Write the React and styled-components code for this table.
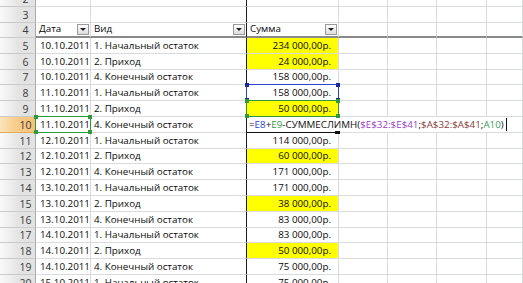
import React from "react";
import styled, { createGlobalStyle } from "styled-components";

const Global = createGlobalStyle`
  html, body { margin: 0; padding: 0; background: #fff; overflow: hidden; }
  body { width: 523px; height: 283px; }
`;

const COLS = "36px 55px 156px 92px 49px 49px 50px 1fr";

const Sheet = styled.div`
  margin-top: -8px;
  font-family: "Open Sans", Lato, sans-serif;
  font-size: 9.8px;
  color: #0a0a0a;
`;

const Row = styled.div`
  display: grid;
  grid-template-columns: ${COLS};
  height: ${(p) => p.$h}px;
  position: relative;
`;

const Head = styled.div`
  box-sizing: border-box;
  background: ${(p) =>
    p.$active
      ? "linear-gradient(90deg, #fbe3bb 0%, #f8cc8a 45%, #f6c27a 100%)"
      : "linear-gradient(90deg, #fafafa 0%, #f0f0f0 25%, #e4e4e4 50%, #e2e2e2 100%)"};
  border-right: 1px solid ${(p) => (p.$active ? "#d9a24e" : "#a9a9a9")};
  border-bottom: 1px solid ${(p) => (p.$active ? "#e0ac5c" : "#cacaca")};
  display: flex;
  align-items: flex-end;
  justify-content: center;
  padding: 0 0 0 16px;
  color: #3a3a3a;
  font-size: 10.5px;
  overflow: hidden;
`;

const Cell = styled.div`
  box-sizing: border-box;
  position: relative;
  border-right: 1px solid ${(p) => (p.$dark ? "#1c1c1c" : "#d9dbdf")};
  border-bottom: ${(p) => (p.$thick ? "2px solid #8a8a8a" : "1px solid #d9dbdf")};
  background: ${(p) => (p.$yellow ? "#ffff00" : "#fff")};
  display: flex;
  align-items: flex-end;
  justify-content: ${(p) => (p.$right ? "flex-end" : "flex-start")};
  padding: ${(p) => (p.$right ? "0 7px 1px 0" : `0 0 1px ${p.$pl || 3}px`)};
  white-space: nowrap;
  overflow: ${(p) => (p.$overflow ? "visible" : "hidden")};
  grid-column: ${(p) => p.$span || "auto"};
`;

const FilterCell = styled(Cell)`
  justify-content: space-between;
  padding: 0 1px 1px 3px;
`;

const DropBtn = styled.span`
  box-sizing: border-box;
  width: 12px;
  height: 11px;
  border: 1px solid #9a9a9a;
  background: linear-gradient(#ffffff, #dcdcdc);
  display: flex;
  align-items: center;
  justify-content: center;
  &::after {
    content: "";
    border-left: 3px solid transparent;
    border-right: 3px solid transparent;
    border-top: 3px solid #222;
  }
`;

const RefBox = styled.span`
  position: absolute;
  left: -1px;
  right: -1px;
  top: -1px;
  bottom: -1px;
  border: 1px solid ${(p) => p.$c};
  pointer-events: none;
  z-index: 2;
`;

const Knob = styled.span`
  position: absolute;
  width: 4px;
  height: 4px;
  background: ${(p) => p.$c};
  ${(p) => (p.$top ? "top: -2px;" : "bottom: -2px;")}
  ${(p) => (p.$left ? "left: -2px;" : "right: -2px;")}
`;

const ActiveMark = styled.span`
  position: absolute;
  left: -1px;
  width: 92px;
  bottom: -1px;
  height: 1px;
  background: #111;
  z-index: 3;
  &::after {
    content: "";
    position: absolute;
    right: -2px;
    top: -1px;
    width: 5px;
    height: 3px;
    background: #111;
  }
`;

const Formula = styled.span`
  position: relative;
  z-index: 2;
  background: #fff;
  padding-right: 2px;
  border-right: 1px solid #111;
  color: #111;
`;

const Ref = styled.span`
  color: ${(p) => p.$c};
`;

const rows = [
  ["10.10.2011", "1. Начальный остаток", "234 000,00р.", true],
  ["10.10.2011", "2. Приход", "24 000,00р.", true],
  ["10.10.2011", "4. Конечный остаток", "158 000,00р.", false],
  ["11.10.2011", "1. Начальный остаток", "158 000,00р.", false],
  ["11.10.2011", "2. Приход", "50 000,00р.", true],
  ["11.10.2011", "4. Конечный остаток", null, false],
  ["12.10.2011", "1. Начальный остаток", "114 000,00р.", false],
  ["12.10.2011", "2. Приход", "60 000,00р.", true],
  ["12.10.2011", "4. Конечный остаток", "171 000,00р.", false],
  ["13.10.2011", "1. Начальный остаток", "171 000,00р.", false],
  ["13.10.2011", "2. Приход", "38 000,00р.", true],
  ["13.10.2011", "4. Конечный остаток", "83 000,00р.", false],
  ["14.10.2011", "1. Начальный остаток", "83 000,00р.", false],
  ["14.10.2011", "2. Приход", "50 000,00р.", true],
  ["14.10.2011", "4. Конечный остаток", "75 000,00р.", false],
  ["15.10.2011", "1. Начальный остаток", "75 000,00р.", false],
];

const BLUE = "#2f3fd0";
const GREEN = "#2e9a3a";

function Empties({ n }) {
  return Array.from({ length: n }, (_, i) => <Cell key={i} />);
}

function Corners({ c }) {
  return (
    <>
      <Knob $c={c} $top $left />
      <Knob $c={c} $top />
      <Knob $c={c} $left />
      <Knob $c={c} />
    </>
  );
}

export default function App() {
  return (
    <>
      <Global />
      <Sheet>
        <Row $h={15}>
          <Head>2</Head>
          <Cell />
          <Cell $dark />
          <Empties n={5} />
        </Row>
        <Row $h={16}>
          <Head>3</Head>
          <Cell />
          <Cell $dark />
          <Empties n={5} />
        </Row>
        <Row $h={15}>
          <Head>4</Head>
          <FilterCell $thick>
            Дата
            <DropBtn />
          </FilterCell>
          <FilterCell $thick $dark>
            Вид
            <DropBtn />
          </FilterCell>
          <FilterCell $thick>
            Сумма
            <DropBtn />
          </FilterCell>
          <Cell $thick />
          <Cell $thick />
          <Cell $thick />
          <Cell $thick />
        </Row>
        {rows.map(([d, v, s, y], i) => {
          const n = i + 5;
          const isEdit = s === null;
          return (
            <Row key={n} $h={15.8}>
              <Head $active={isEdit}>{n}</Head>
              <Cell $pl={4} $overflow={n === 10}>
                {d}
                {n === 10 && (
                  <RefBox $c={GREEN}>
                    <Corners c={GREEN} />
                  </RefBox>
                )}
              </Cell>
              <Cell $dark>{v}</Cell>
              {isEdit ? (
                <Cell $overflow $pl={2} $span="4 / -1">
                  <Formula>
                    =<Ref $c={BLUE}>E8</Ref>+<Ref $c={GREEN}>E9</Ref>-СУММЕСЛИМН(
                    <Ref $c="#9a3fc4">$E$32:$E$41</Ref>;
                    <Ref $c="#8a3a34">$A$32:$A$41</Ref>;
                    <Ref $c="#3aa05a">A10</Ref>)
                  </Formula>
                  <ActiveMark />
                </Cell>
              ) : (
                <>
                  <Cell $right $yellow={y} $overflow={n === 8 || n === 9}>
                    {s}
                    {n === 8 && (
                      <RefBox $c={BLUE}>
                        <Corners c="#1a2a9a" />
                      </RefBox>
                    )}
                    {n === 9 && (
                      <RefBox $c={GREEN}>
                        <Corners c={GREEN} />
                      </RefBox>
                    )}
                  </Cell>
                  <Empties n={4} />
                </>
              )}
            </Row>
          );
        })}
      </Sheet>
    </>
  );
}
